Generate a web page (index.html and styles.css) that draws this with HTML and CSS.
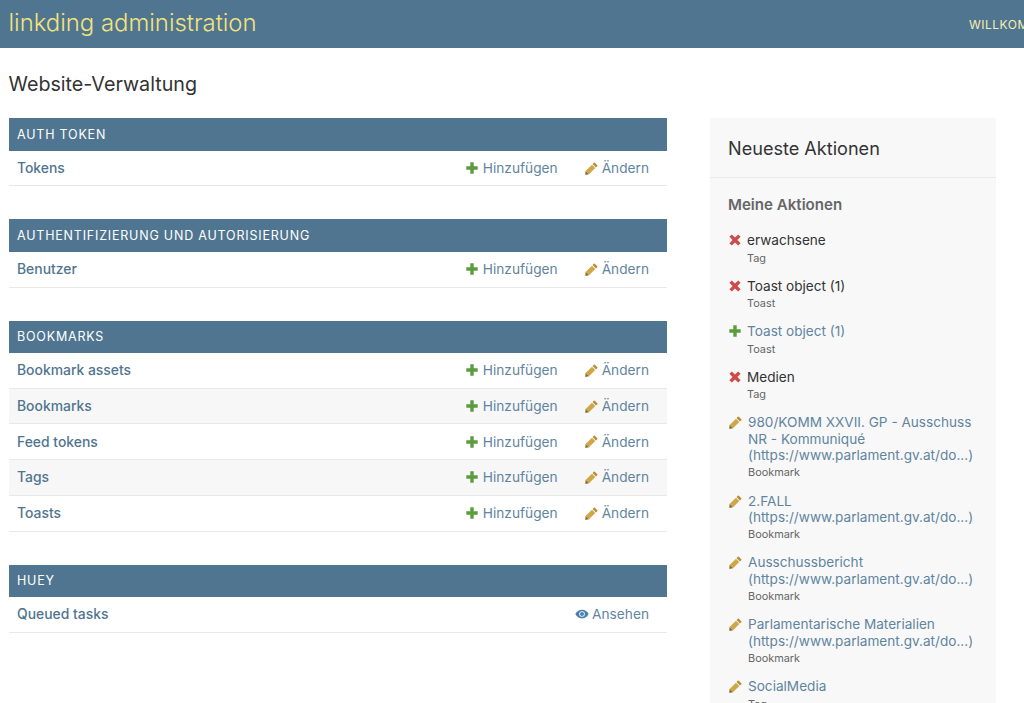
FILE: index.html
```html
<!DOCTYPE html>
<html lang="de">
<head>
<meta charset="utf-8">
<title>Website-Verwaltung</title>
<link rel="stylesheet" href="styles.css">
</head>
<body>
<svg class="sprite" width="0" height="0" aria-hidden="true">
  <symbol id="i-plus" viewBox="0 0 12 12"><path d="M4.3 0.3h3.400v4h4v3.400h-4v4H4.300v-4h-4V4.300h4z"/></symbol>
  <symbol id="i-pen" viewBox="0 0 14 14"><path fill="#b98f35" d="M10.6 0.8l2.600 2.600a.8.8 0 0 1 0 1.100l-1.400 1.400-3.700-3.700 1.400-1.400a.8.8 0 0 1 1.100 0z"/><path fill="#d0a748" d="M7.500 2.900l3.600 3.600-6.800 6.800-3.700-3.600z"/><path fill="#8a6a2c" d="M.6 9.700l3.700 3.600-4 .6z"/></symbol>
  <symbol id="i-x" viewBox="0 0 12 12"><path d="M2.800 0.400L6 3.600 9.200 0.400l2.400 2.400L8.400 6l3.200 3.200-2.400 2.400L6 8.400l-3.200 3.200-2.400-2.400L3.600 6 .4 2.800z"/></symbol>
  <symbol id="i-eye" viewBox="0 0 16 11"><path fill-rule="evenodd" d="M8 .5c3.400 0 6.200 2 7.600 5-1.400 3-4.200 5-7.600 5s-6.200-2-7.600-5C1.800 2.500 4.600.5 8 .5zM8 2.300a3.200 3.200 0 1 0 0 6.400 3.200 3.200 0 0 0 0-6.400z"/><circle cx="8" cy="5.500" r="2.300"/></symbol>
</svg>
<header class="site-header">
  <div class="branding">linkding administration</div>
  <div class="user-tools">WILLKOMMEN, ADMIN.</div>
</header>
<div class="content">
  <h1 class="page-title">Website-Verwaltung</h1>
  <div class="columns">
    <main class="apps">
      <section class="module">
        <h2 class="caption">Auth Token</h2>
        <div class="row"><a class="model">Tokens</a><a class="action"><svg class="ico plus"><use href="#i-plus"/></svg>Hinzufügen</a><a class="action change"><svg class="ico pen"><use href="#i-pen"/></svg>Ändern</a></div>
      </section>
      <section class="module">
        <h2 class="caption">Authentifizierung und Autorisierung</h2>
        <div class="row"><a class="model">Benutzer</a><a class="action"><svg class="ico plus"><use href="#i-plus"/></svg>Hinzufügen</a><a class="action change"><svg class="ico pen"><use href="#i-pen"/></svg>Ändern</a></div>
      </section>
      <section class="module">
        <h2 class="caption">Bookmarks</h2>
        <div class="row"><a class="model">Bookmark assets</a><a class="action"><svg class="ico plus"><use href="#i-plus"/></svg>Hinzufügen</a><a class="action change"><svg class="ico pen"><use href="#i-pen"/></svg>Ändern</a></div>
        <div class="row alt"><a class="model">Bookmarks</a><a class="action"><svg class="ico plus"><use href="#i-plus"/></svg>Hinzufügen</a><a class="action change"><svg class="ico pen"><use href="#i-pen"/></svg>Ändern</a></div>
        <div class="row"><a class="model">Feed tokens</a><a class="action"><svg class="ico plus"><use href="#i-plus"/></svg>Hinzufügen</a><a class="action change"><svg class="ico pen"><use href="#i-pen"/></svg>Ändern</a></div>
        <div class="row alt"><a class="model">Tags</a><a class="action"><svg class="ico plus"><use href="#i-plus"/></svg>Hinzufügen</a><a class="action change"><svg class="ico pen"><use href="#i-pen"/></svg>Ändern</a></div>
        <div class="row"><a class="model">Toasts</a><a class="action"><svg class="ico plus"><use href="#i-plus"/></svg>Hinzufügen</a><a class="action change"><svg class="ico pen"><use href="#i-pen"/></svg>Ändern</a></div>
      </section>
      <section class="module">
        <h2 class="caption">Huey</h2>
        <div class="row"><a class="model">Queued tasks</a><a class="action"><svg class="ico eye"><use href="#i-eye"/></svg>Ansehen</a></div>
      </section>
    </main>
    <aside class="sidebar">
      <h2 class="side-title">Neueste Aktionen</h2>
      <h3 class="side-sub">Meine Aktionen</h3>
      <ul class="log">
        <li class="entry"><svg class="ico x"><use href="#i-x"/></svg><div><span class="plain">erwachsene</span><small>Tag</small></div></li>
        <li class="entry"><svg class="ico x"><use href="#i-x"/></svg><div><span class="plain">Toast object (1)</span><small>Toast</small></div></li>
        <li class="entry"><svg class="ico plus"><use href="#i-plus"/></svg><div><a>Toast object (1)</a><small>Toast</small></div></li>
        <li class="entry"><svg class="ico x"><use href="#i-x"/></svg><div><span class="plain">Medien</span><small>Tag</small></div></li>
        <li class="entry"><svg class="ico pen"><use href="#i-pen"/></svg><div><a>980/KOMM XXVII. GP - Ausschuss NR - Kommuniqué (https://www.parlament.gv.at/do...)</a><small>Bookmark</small></div></li>
        <li class="entry"><svg class="ico pen"><use href="#i-pen"/></svg><div><a>2.FALL (https://www.parlament.gv.at/do...)</a><small>Bookmark</small></div></li>
        <li class="entry"><svg class="ico pen"><use href="#i-pen"/></svg><div><a>Ausschussbericht (https://www.parlament.gv.at/do...)</a><small>Bookmark</small></div></li>
        <li class="entry"><svg class="ico pen"><use href="#i-pen"/></svg><div><a>Parlamentarische Materialien (https://www.parlament.gv.at/do...)</a><small>Bookmark</small></div></li>
        <li class="entry"><svg class="ico pen"><use href="#i-pen"/></svg><div><a>SocialMedia</a><small>Tag</small></div></li>
      </ul>
    </aside>
  </div>
</div>
</body>
</html>
```
FILE: styles.css
```css
* { box-sizing: border-box; }
html, body { margin: 0; padding: 0; height: 703px; overflow: hidden; background: #fff; }
body { font-family: Inter, Roboto, "Liberation Sans", sans-serif; font-size: 13.700px; color: #333; }
.sprite { position: absolute; }
.site-header { display: flex; justify-content: space-between; align-items: center; height: 48px; padding-bottom: 3px; background: #507590; padding-left: 8.500px; width: 1200px; }
.branding { font-size: 23.900px; font-weight: 300; color: #f3e37c; white-space: nowrap; }
.user-tools { font-size: 12px; color: #f5eeb0; letter-spacing: 0.5px; margin-left: auto; width: 231px; padding-top: 3px; white-space: nowrap; }
.content { padding: 0 0 0 8.500px; }
.page-title { margin: 23.500px 0 0; font-size: 19.700px; line-height: 24px; font-weight: 400; color: #333; }
.columns { display: flex; align-items: flex-start; margin-top: 22.700px; }
.apps { width: 658px; flex: none; }
.module { margin-bottom: 33px; }
.caption { margin: 0; height: 32.500px; padding: 0 8.500px; display: flex; align-items: center; background: #507590; color: #fff; font-size: 12.500px; font-weight: 400; letter-spacing: .8px; text-transform: uppercase; }
.row { display: flex; align-items: center; height: 35.700px; padding: 0 17.500px 0 8.500px; border-bottom: 1px solid #e8e8e8; }
.row.alt { background: #f7f7f7; }
.model { flex: 1; font-weight: 500; color: #4f7590; font-size: 13.900px; }
.action { display: flex; align-items: center; color: #5f85a0; font-size: 13.700px; }
.change { margin-left: 27px; }
.ico { flex: none; }
.plus { width: 12px; height: 12px; fill: #5c9b3f; margin-right: 5px; }
.pen { width: 13px; height: 13px; margin-right: 4px; }
.eye { width: 14px; height: 10px; fill: #4a80b0; margin-right: 3px; }
.x { width: 12px; height: 12px; fill: #cf4a4a; margin-right: 5px; }
.sidebar { width: 285.500px; flex: none; margin-left: 43.500px; background: #f8f8f8; padding-bottom: 20px; }
.side-title { margin: 0; padding: 0 18px; height: 60px; display: flex; align-items: center; font-size: 18.100px; font-weight: 400; color: #333; border-bottom: 1px solid #eaeaea; }
.side-sub { margin: 17px 18px 0; font-size: 15.100px; line-height: 20px; font-weight: 600; color: #666; }
.log { list-style: none; margin: 17px 18px 0 19px; padding: 0; }
.entry { display: flex; align-items: flex-start; margin-bottom: 13.100px; }
.entry .ico { margin-top: 2px; margin-right: 6px; }
.entry a, .plain { display: block; font-size: 13.600px; line-height: 16.400px; color: #5f85a0; }
.plain { color: #333; }
.entry small { display: block; font-size: 10.900px; line-height: 13px; margin-top: 3px; color: #666; }
```
